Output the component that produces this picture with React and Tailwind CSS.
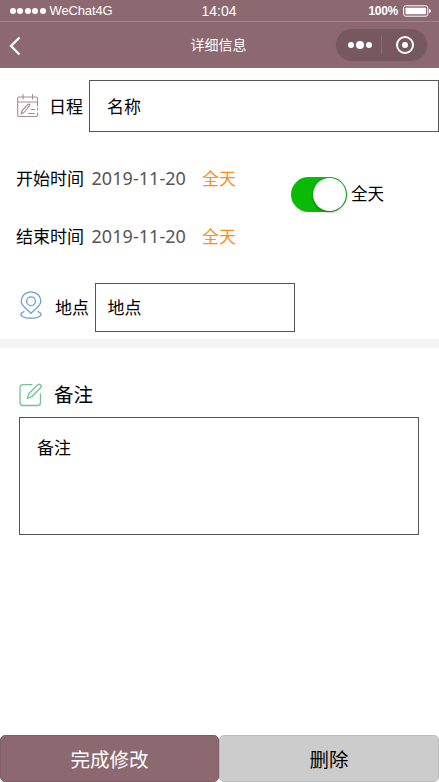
const ScheduleIcon = () => (
  <svg className="-mt-px h-6 w-[22px] shrink-0" viewBox="0 0 22 24" fill="none" stroke="#a58b92" strokeWidth="1.1" strokeLinecap="round" strokeLinejoin="round">
    <path d="M20.500 12V4.500Q20.500 3 19 3H2Q.7 3 .7 4.500V21Q.7 22.500 2 22.500H19Q20.500 22.500 20.500 21V19M20.500 14V16M.7 8H20.500M6 .6V5M15.500 .6V5" />
    <path d="M4 20L5.200 16.500L11.200 10.200Q12.500 9.800 13 11.200L7.500 18ZM14 15.500H17.500M11.500 19.500H17.500" />
  </svg>
);

const PinIcon = () => (
  <svg className="h-7 w-[22px] shrink-0" viewBox="0 0 22 28" fill="none" stroke="#6c9fd2" strokeWidth="1.3" strokeLinecap="round" strokeLinejoin="round">
    <path d="M11 22.300C7 17.800 1.200 15 1.200 10.200A9.800 9.400 0 0 1 20.800 10.200C20.800 15 15 17.800 11 22.300Z" />
    <circle cx="11" cy="10.200" r="4.400" />
    <path d="M4 20.600C-1.500 22.500 .5 27.200 11 27.200S23.500 22.500 18 20.600" />
  </svg>
);

const NoteIcon = () => (
  <svg className="h-6 w-6 shrink-0" viewBox="0 0 24 24" fill="none" stroke="#72c494" strokeWidth="1.3" strokeLinecap="round" strokeLinejoin="round">
    <path d="M13 1.700H4Q1 1.700 1 4.700V19.500Q1 22.500 4 22.500H18.500Q21.500 22.500 21.500 19.500V11" />
    <path d="M8.500 15.500L9.800 10.800L19 1.500Q20 .7 21 1.500L22 2.500Q22.700 3.500 22 4.200L12.700 13.700Z" />
  </svg>
);

const TimeRow = ({ label }) => (
  <div className="flex h-[58px] items-center whitespace-nowrap">
    <span className="w-[75.500px] pt-[3px] text-[17px]">{label}</span>
    <span className="w-[110.500px] font-['Noto_Sans'] text-[18px] tracking-[0.05px] text-[#555]">2019-11-20</span>
    <span className="pt-[3px] text-[17px] text-[#ff8c1a]">全天</span>
  </div>
);

export default function App() {
  return (
    <div className="flex h-[782px] w-[439px] flex-col overflow-hidden bg-white font-['Liberation_Sans','Noto_Sans_CJK_SC',sans-serif] text-black">
      <header className="h-[68px] bg-[#8c6970] text-white">
        <div className="grid h-[22px] grid-cols-3 items-center border-b border-[#a3858b] pl-[10px] pr-2">
          <div className="flex items-center gap-1 text-[13px] tracking-[-0.15px]">
            <span className="flex gap-[1.400px]">
              {[0, 1, 2, 3, 4].map((n) => <i key={n} className="size-[6px] rounded-full bg-white" />)}
            </span>
            WeChat4G
          </div>
          <div className="pr-[3px] pt-[2px] text-center text-[14px] leading-[19px]">14:04</div>
          <div className="flex items-center justify-end gap-[5px] text-[12px] font-bold tracking-[-0.3px]">
            100%
            <svg className="mt-px h-3 w-7" viewBox="0 0 28 12" fill="none">
              <rect x=".6" y=".8" width="24.200" height="10.400" rx="2" stroke="white" />
              <rect x="2.500" y="2.800" width="20.500" height="6.400" rx=".5" fill="white" />
              <path d="M26 4Q28 4.300 28 6T26 8Z" fill="white" />
            </svg>
          </div>
        </div>
        <nav className="flex h-[46px] items-center justify-between pl-[9px] pr-[11px]">
          <svg className="mt-[2px] h-5 w-3" viewBox="0 0 12 20" fill="none" stroke="white" strokeWidth="2.300">
            <path d="M10.500 1.500L2 10L10.500 18.500" />
          </svg>
          <span className="pl-[81px] text-[14px]">详细信息</span>
          <div className="flex h-[34px] w-[93px] items-center rounded-full border border-[#856b70] bg-[#76585e]">
            <div className="flex w-[45px] items-center justify-center gap-[2px] pl-[2px]">
              <i className="size-[6px] rounded-full bg-white" />
              <i className="size-[8px] rounded-full bg-white" />
              <i className="size-[6px] rounded-full bg-white" />
            </div>
            <i className="h-[18px] w-px bg-[#8a6b71]" />
            <div className="flex flex-1 justify-center">
              <i className="flex size-[18px] items-center justify-center rounded-full border-[2.500px] border-white">
                <i className="size-[6px] rounded-full bg-white" />
              </i>
            </div>
          </div>
        </nav>
      </header>

      <main className="flex-1">
        <div className="mt-3 flex h-[52px] items-center pl-[17px] text-[17px]">
          <ScheduleIcon />
          <span className="ml-[10px] w-10 pt-[3px]">日程</span>
          <div className="flex h-full flex-1 items-center border border-[#555] pl-[17px] pt-[3px]">名称</div>
        </div>

        <div className="mt-[17px] flex h-[116px] pl-4">
          <div className="w-[275px]">
            <TimeRow label="开始时间" />
            <TimeRow label="结束时间" />
          </div>
          <div className="mt-7 flex h-[35px] items-center gap-1">
            <div className="flex h-[35px] w-[56px] items-center justify-end rounded-full bg-[#09bb07] pr-px">
              <i className="size-[33px] rounded-full bg-white shadow-[0_1px_3px_rgba(0,0,0,0.4)]" />
            </div>
            <span className="-mt-px text-[16.500px]">全天</span>
          </div>
        </div>

        <div className="mt-[18px] flex h-[49px] items-center pl-5 text-[17px]">
          <div className="-mt-[6px]"><PinIcon /></div>
          <span className="ml-[13px] w-10 pt-[2px]">地点</span>
          <div className="flex h-full w-[200px] items-center border border-[#555] pl-[11.500px] pt-[3px]">地点</div>
        </div>

        <div className="mt-[7px] h-[9px] bg-[#f3f3f3]" />

        <section className="px-[19px] pt-[31px]">
          <div className="flex h-[31px] items-center gap-[11px] text-[19.500px]">
            <NoteIcon />
            <span className="pt-[3px]">备注</span>
          </div>
          <div className="mt-[7px] h-[118px] w-[400px] border border-[#555] px-[17px] pt-[18px] text-[17px] leading-[25px]">备注</div>
        </section>
      </main>

      <footer className="flex h-[47px] text-[19.500px]">
        <button className="w-[219px] rounded-[5px] border border-[#7e5f65] bg-[#8c6970] pt-[5px] text-white">完成修改</button>
        <button className="w-[220px] rounded-[5px] border border-[#bcbcbc] bg-[#ccc] pt-[5px]">删除</button>
      </footer>
    </div>
  );
}
